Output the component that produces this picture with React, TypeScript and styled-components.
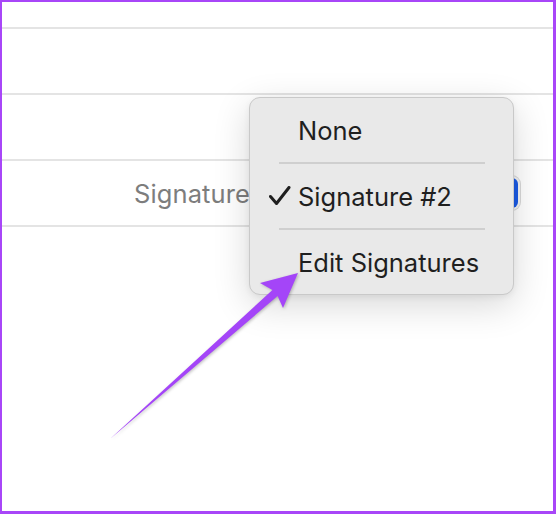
import styled, { createGlobalStyle } from "styled-components";

const GlobalStyle = createGlobalStyle`
  html, body {
    margin: 0;
    padding: 0;
    background: #ffffff;
  }
  body {
    font-family: Inter, "Noto Sans", "Liberation Sans", sans-serif;
  }
`;

const Frame = styled.div`
  position: relative;
  width: 556px;
  height: 514px;
  box-sizing: border-box;
  border: 2px solid #a846f8;
  border-right-width: 3px;
  border-bottom-width: 3px;
  background: #ffffff;
  overflow: hidden;
`;

const Row = styled.div<{ $h: number }>`
  height: ${(p) => p.$h}px;
  border-bottom: 2px solid #e4e4e4;
  display: flex;
  align-items: center;
  justify-content: flex-end;
  padding-right: 33px;
  box-sizing: border-box;
`;

const Label = styled.span`
  font-size: 25.5px;
  color: #7d7d7d;
  letter-spacing: 0.1px;
`;

const PopUp = styled.div`
  width: 268px;
  height: 34px;
  margin-left: 2px;
  border-radius: 8px;
  background: #f4f4f4;
  box-shadow: 0 0 0 1px #d8d8d8;
  display: flex;
  justify-content: flex-end;
`;

const PopUpCap = styled.div`
  width: 22px;
  height: 30px;
  margin: 2px;
  border-radius: 6px;
  background: #1b5ce8;
`;

const Menu = styled.div`
  position: absolute;
  left: 247px;
  top: 95px;
  width: 265px;
  box-sizing: border-box;
  background: #e9e9e9;
  border: 1px solid #c9c9c9;
  border-radius: 11px;
  box-shadow: 0 10px 36px rgba(0, 0, 0, 0.16), 0 2px 6px rgba(0, 0, 0, 0.06);
  display: flex;
  flex-direction: column;
`;

const Item = styled.div`
  height: 64px;
  display: flex;
  align-items: center;
  font-size: 25.5px;
  color: #1f1f1f;
  letter-spacing: 0;
`;

const CheckCol = styled.div`
  width: 48px;
  padding-left: 19px;
  box-sizing: border-box;
  display: flex;
  align-items: center;
`;

const Separator = styled.div`
  height: 2px;
  margin: 0 28px 0 29px;
  background: #cfcfcf;
`;

const ArrowLayer = styled.svg`
  position: absolute;
  left: -2px;
  top: -2px;
  width: 556px;
  height: 514px;
  pointer-events: none;
  filter: drop-shadow(1px 1px 1.5px rgba(0, 0, 0, 0.25));
`;

const items = [
  { text: "None", checked: false },
  { text: "Signature #2", checked: true },
  { text: "Edit Signatures", checked: false },
];

export default function App() {
  return (
    <>
      <GlobalStyle />
      <Frame>
        <Row $h={27} />
        <Row $h={66} />
        <Row $h={66} />
        <Row $h={66}>
          <Label>Signature</Label>
          <PopUp>
            <PopUpCap />
          </PopUp>
        </Row>

        <Menu>
          {items.map((it, i) => (
            <div key={it.text}>
              {i > 0 && <Separator />}
              <Item>
                <CheckCol>
                  {it.checked && (
                    <svg width="22" height="20" viewBox="0 0 22 20">
                      <path
                        d="M1.5 10.5 L7.5 17.5 L20 1.5"
                        fill="none"
                        stroke="#1f1f1f"
                        strokeWidth="3"
                        strokeLinecap="round"
                        strokeLinejoin="round"
                      />
                    </svg>
                  )}
                </CheckCol>
                {it.text}
              </Item>
            </div>
          ))}
        </Menu>

        <ArrowLayer viewBox="0 0 556 514">
          <polygon
            points="110,439 272.4,290 260,283 298,273 283,308 277.6,296"
            fill="#a445f8"
            strokeLinejoin="round"
          />
        </ArrowLayer>
      </Frame>
    </>
  );
}
